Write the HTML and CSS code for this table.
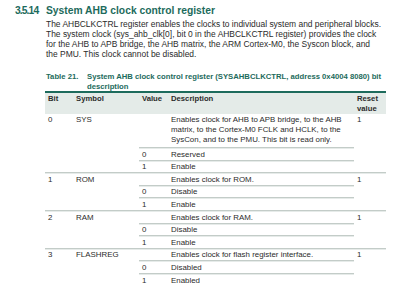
FILE: index.html
```html
<!DOCTYPE html>
<html>
<head>
<meta charset="utf-8">
<link rel="stylesheet" href="styles.css">
</head>
<body>
<div class="page">
  <h2 class="heading"><span class="num">3.5.14</span><span class="title">System AHB clock control register</span></h2>
  <p class="para">The AHBCLKCTRL register enables the clocks to individual system and peripheral blocks.<br>The system clock (sys_ahb_clk[0], bit 0 in the AHBCLKCTRL register) provides the clock<br>for the AHB to APB bridge, the AHB matrix, the ARM Cortex-M0, the Syscon block, and<br>the PMU. This clock cannot be disabled.</p>
  <div class="caption"><span class="cap-num">Table 21.</span><span class="cap-text">System AHB clock control register (SYSAHBCLKCTRL, address 0x4004 8080) bit<br>description</span></div>
  <table class="reg">
    <colgroup>
      <col class="c-bit"><col class="c-sym"><col class="c-val"><col class="c-desc"><col class="c-rst">
    </colgroup>
    <thead>
      <tr><th>Bit</th><th>Symbol</th><th>Value</th><th>Description</th><th>Reset<br>value</th></tr>
    </thead>
    <tbody>
      <tr class="main first"><td rowspan="3">0</td><td rowspan="3">SYS</td><td></td><td class="tall">Enables clock for AHB to APB bridge, to the AHB<br>matrix, to the Cortex-M0 FCLK and HCLK, to the<br>SysCon, and to the PMU. This bit is read only.</td><td rowspan="3">1</td></tr>
      <tr class="sub"><td>0</td><td>Reserved</td></tr>
      <tr class="sub"><td>1</td><td>Enable</td></tr>
      <tr class="main"><td rowspan="3">1</td><td rowspan="3">ROM</td><td></td><td>Enables clock for ROM.</td><td rowspan="3">1</td></tr>
      <tr class="sub"><td>0</td><td>Disable</td></tr>
      <tr class="sub"><td>1</td><td>Enable</td></tr>
      <tr class="main"><td rowspan="3">2</td><td rowspan="3">RAM</td><td></td><td>Enables clock for RAM.</td><td rowspan="3">1</td></tr>
      <tr class="sub"><td>0</td><td>Disable</td></tr>
      <tr class="sub"><td>1</td><td>Enable</td></tr>
      <tr class="main"><td rowspan="3">3</td><td rowspan="3">FLASHREG</td><td></td><td>Enables clock for flash register interface.</td><td rowspan="3">1</td></tr>
      <tr class="sub"><td>0</td><td>Disabled</td></tr>
      <tr class="sub"><td>1</td><td>Enabled</td></tr>
    </tbody>
  </table>
</div>
</body>
</html>
```
FILE: styles.css
```css
html, body {
  margin: 0;
  padding: 0;
  background: #ffffff;
}
body {
  font-family: "Liberation Sans", Arial, sans-serif;
  color: #2b2b2b;
}
.page {
  padding: 4px 0 0 18px;
  width: 382px;
}
.heading {
  display: flex;
  margin: 0;
  font-size: 10.3px;
  line-height: 13px;
  font-weight: bold;
  color: #1d6b5c;
}
.heading .num {
  flex: 0 0 28px;
  margin-left: -3px;
  margin-right: 3px;
  letter-spacing: -0.9px;
}
.para {
  margin: 3px 0 0 28px;
  font-size: 8.45px;
  line-height: 9.9px;
  white-space: nowrap;
}
.caption {
  display: flex;
  margin: 12px 0 0 28px;
  font-size: 7.7px;
  line-height: 10px;
  font-weight: bold;
  color: #1d6b5c;
  white-space: nowrap;
}
.cap-num {
  flex: 0 0 41px;
}
.reg {
  margin: -1px 0 0 27px;
  border-collapse: collapse;
  table-layout: fixed;
  width: 341px;
  font-size: 7.9px;
  line-height: 10px;
  white-space: nowrap;
}
.c-bit { width: 28px; }
.c-sym { width: 66px; }
.c-val { width: 29px; }
.c-desc { width: 186px; }
.c-rst { width: 32px; }
.reg th {
  background: #e4ebe8;
  border-top: 2px solid #1d6b5c;
  text-align: left;
  vertical-align: top;
  font-weight: bold;
  font-size: 7.7px;
  padding: 1px 3px 0;
  color: #2b2b2b;
}
.reg td {
  text-align: left;
  vertical-align: top;
  padding: 1.6px 3px 0;
  border-top: 1px solid #c3ccc8;
  background: linear-gradient(#e6ebe9, #e6ebe9) top / 100% 1px no-repeat;
}
.reg tr.first td {
  border-top: none;
  background: none;
  padding-top: 1px;
}
.reg td.tall {
  padding-bottom: 2.4px;
}
```
